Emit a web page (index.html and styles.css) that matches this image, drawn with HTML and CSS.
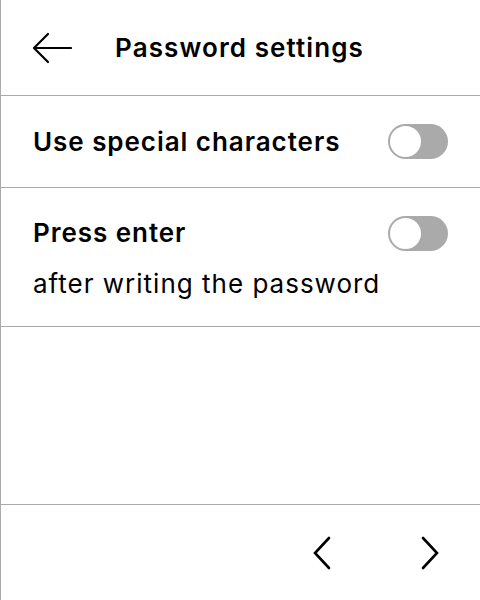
FILE: index.html
```html
<!DOCTYPE html>
<html>
<head>
<meta charset="utf-8">
<link rel="stylesheet" href="styles.css">
</head>
<body>
<div class="screen">
  <header class="header">
    <svg class="back" width="40" height="32" viewBox="0 0 40 32">
      <path d="M16 2 L2 16 L16 30 M2 16 H39" fill="none" stroke="#000" stroke-width="2.2" stroke-linecap="round" stroke-linejoin="round"/>
    </svg>
    <h1 class="title">Password settings</h1>
  </header>
  <div class="row row-single">
    <span class="label">Use special characters</span>
    <span class="toggle"><span class="knob"></span></span>
  </div>
  <div class="row row-double">
    <div class="row-top">
      <span class="label">Press enter</span>
      <span class="toggle"><span class="knob"></span></span>
    </div>
    <div class="desc">after writing the password</div>
  </div>
  <div class="spacer"></div>
  <footer class="footer">
    <span class="nav">
      <svg width="20" height="34" viewBox="0 0 20 34">
        <path d="M17 2 L3 17 L17 32" fill="none" stroke="#000" stroke-width="2.6" stroke-linecap="round" stroke-linejoin="miter"/>
      </svg>
    </span>
    <span class="nav">
      <svg width="20" height="34" viewBox="0 0 20 34">
        <path d="M3 2 L17 17 L3 32" fill="none" stroke="#000" stroke-width="2.6" stroke-linecap="round" stroke-linejoin="miter"/>
      </svg>
    </span>
  </footer>
</div>
</body>
</html>
```
FILE: styles.css
```css
html, body {
  margin: 0;
  padding: 0;
  background: #fff;
}
body {
  font-family: Inter, "Noto Sans", sans-serif;
  color: #000;
}
.screen {
  width: 479px;
  height: 600px;
  border-left: 1px solid #aaa;
  display: flex;
  flex-direction: column;
}
.header {
  border-bottom: 1px solid #aaa;
  display: flex;
  align-items: center;
  padding-left: 31px;
  box-sizing: border-box;
  height: 96px;
}
.back {
  display: block;
}
.title {
  margin: 0 0 0 43px;
  font-size: 26px;
  font-weight: 600;
  line-height: 32px;
  letter-spacing: 1.1px;
}
.row {
  border-bottom: 1px solid #aaa;
  padding: 0 32px 0 32px;
}
.row-single {
  height: 91px;
  display: flex;
  align-items: center;
  justify-content: space-between;
}
.row-double {
  height: 139px;
  box-sizing: border-box;
  padding-top: 28px;
}
.row-top {
  display: flex;
  align-items: center;
  justify-content: space-between;
  height: 34px;
}
.label {
  font-size: 26px;
  font-weight: 600;
  line-height: 32px;
  letter-spacing: 0.95px;
}
.desc {
  font-size: 26px;
  line-height: 32px;
  margin-top: 18px;
  letter-spacing: 1px;
}
.toggle {
  width: 60px;
  height: 35px;
  border-radius: 18px;
  background: #aaa;
  position: relative;
  flex: none;
}
.knob {
  position: absolute;
  left: 2px;
  top: 2px;
  width: 31px;
  height: 31px;
  border-radius: 50%;
  background: #fff;
}
.spacer {
  flex: 1;
}
.footer {
  height: 96px;
  border-top: 1px solid #aaa;
  box-sizing: border-box;
  display: flex;
  align-items: center;
  justify-content: flex-end;
  padding-right: 26px;
  gap: 60px;
}
.nav {
  width: 48px;
  display: flex;
  justify-content: center;
}
.nav svg {
  display: block;
}
```
